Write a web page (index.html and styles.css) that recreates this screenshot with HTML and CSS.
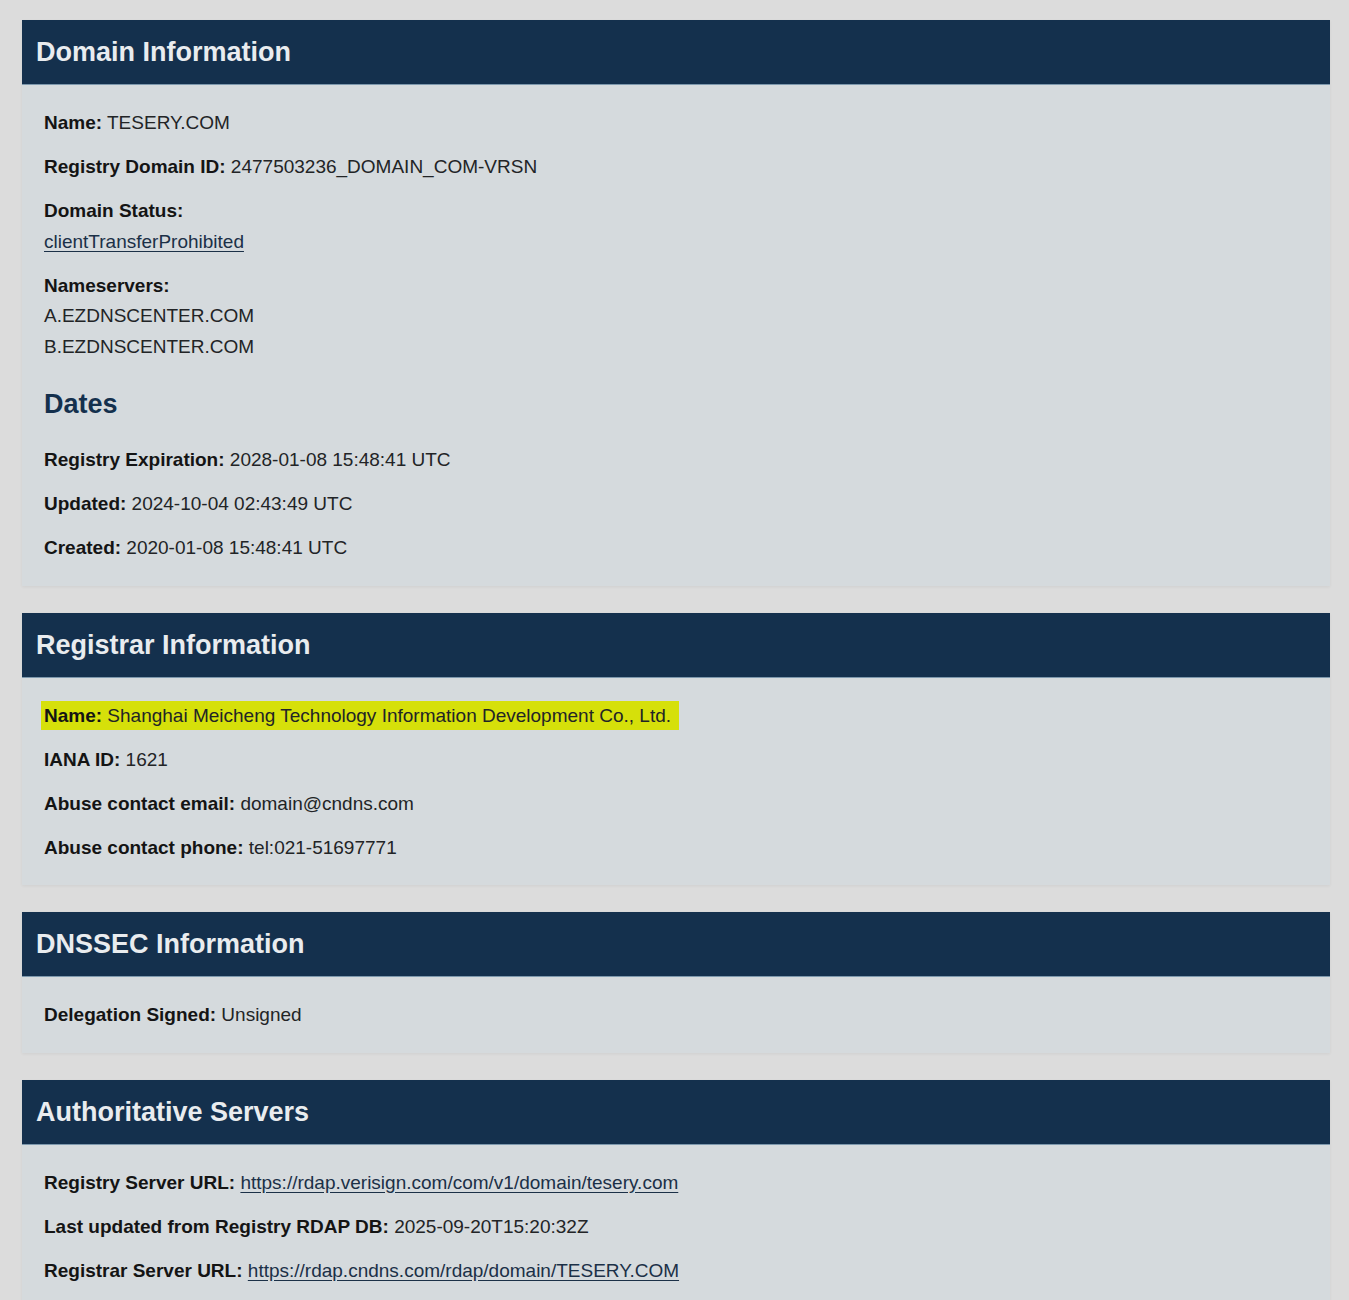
FILE: index.html
```html
<!DOCTYPE html>
<html lang="en">
<head>
<meta charset="utf-8">
<title>RDAP Lookup - TESERY.COM</title>
<link rel="stylesheet" href="styles.css">
</head>
<body>
<main class="page">
  <section class="card">
    <h2 class="card-title">Domain Information</h2>
    <div class="card-body">
      <p class="row"><b>Name:</b> TESERY.COM</p>
      <p class="row"><b>Registry Domain ID:</b> 2477503236_DOMAIN_COM-VRSN</p>
      <div class="row">
        <b>Domain Status:</b><br>
        <a href="#" class="link">clientTransferProhibited</a>
      </div>
      <div class="row">
        <b>Nameservers:</b><br>
        A.EZDNSCENTER.COM<br>
        B.EZDNSCENTER.COM
      </div>
      <h3 class="sub-title">Dates</h3>
      <p class="row"><b>Registry Expiration:</b> 2028-01-08 15:48:41 UTC</p>
      <p class="row"><b>Updated:</b> 2024-10-04 02:43:49 UTC</p>
      <p class="row"><b>Created:</b> 2020-01-08 15:48:41 UTC</p>
    </div>
  </section>

  <section class="card">
    <h2 class="card-title">Registrar Information</h2>
    <div class="card-body">
      <p class="row"><span class="highlight"><b>Name:</b> Shanghai Meicheng Technology Information Development Co., Ltd.</span></p>
      <p class="row"><b>IANA ID:</b> 1621</p>
      <p class="row"><b>Abuse contact email:</b> domain@cndns.com</p>
      <p class="row"><b>Abuse contact phone:</b> tel:021-51697771</p>
    </div>
  </section>

  <section class="card">
    <h2 class="card-title">DNSSEC Information</h2>
    <div class="card-body">
      <p class="row"><b>Delegation Signed:</b> Unsigned</p>
    </div>
  </section>

  <section class="card">
    <h2 class="card-title">Authoritative Servers</h2>
    <div class="card-body">
      <p class="row"><b>Registry Server URL:</b> <a href="#" class="link">https://rdap.verisign.com/com/v1/domain/tesery.com</a></p>
      <p class="row"><b>Last updated from Registry RDAP DB:</b> 2025-09-20T15:20:32Z</p>
      <p class="row"><b>Registrar Server URL:</b> <a href="#" class="link">https://rdap.cndns.com/rdap/domain/TESERY.COM</a></p>
    </div>
  </section>
</main>
</body>
</html>
```

FILE: styles.css
```css
html, body {
  margin: 0;
  padding: 0;
  background: #dcdcdc;
}

body {
  font-family: "Liberation Sans", Arial, sans-serif;
  color: #222426;
}

.page {
  padding: 20px 19px 40px 22px;
  display: flex;
  flex-direction: column;
  gap: 27px;
}

.card {
  background: #d5dadd;
  box-shadow: 0 1px 3px rgba(0, 0, 0, 0.06);
}

.card-title {
  margin: 0;
  height: 64px;
  line-height: 65px;
  padding: 0 14px;
  background: #14304d;
  color: #e9ecef;
  font-size: 27px;
  font-weight: bold;
  border-bottom: 1px solid #7d98ad;
  box-sizing: content-box;
}

.card-body {
  padding: 23px 22px 22px;
  font-size: 19px;
  line-height: 30.5px;
}

.row {
  margin: 0 0 13.5px;
}

.row:last-child {
  margin-bottom: 0;
}

.row b {
  color: #141414;
}

.sub-title {
  margin: 27px 0 25px;
  font-size: 27px;
  line-height: 31px;
  font-weight: bold;
  color: #14304d;
}

.link {
  color: #1b3047;
  text-decoration: underline;
  text-underline-offset: 3px;
}

.highlight {
  background: #d6e00a;
  padding: 4px 8px 4px 3px;
  margin-left: -3px;
}
```
